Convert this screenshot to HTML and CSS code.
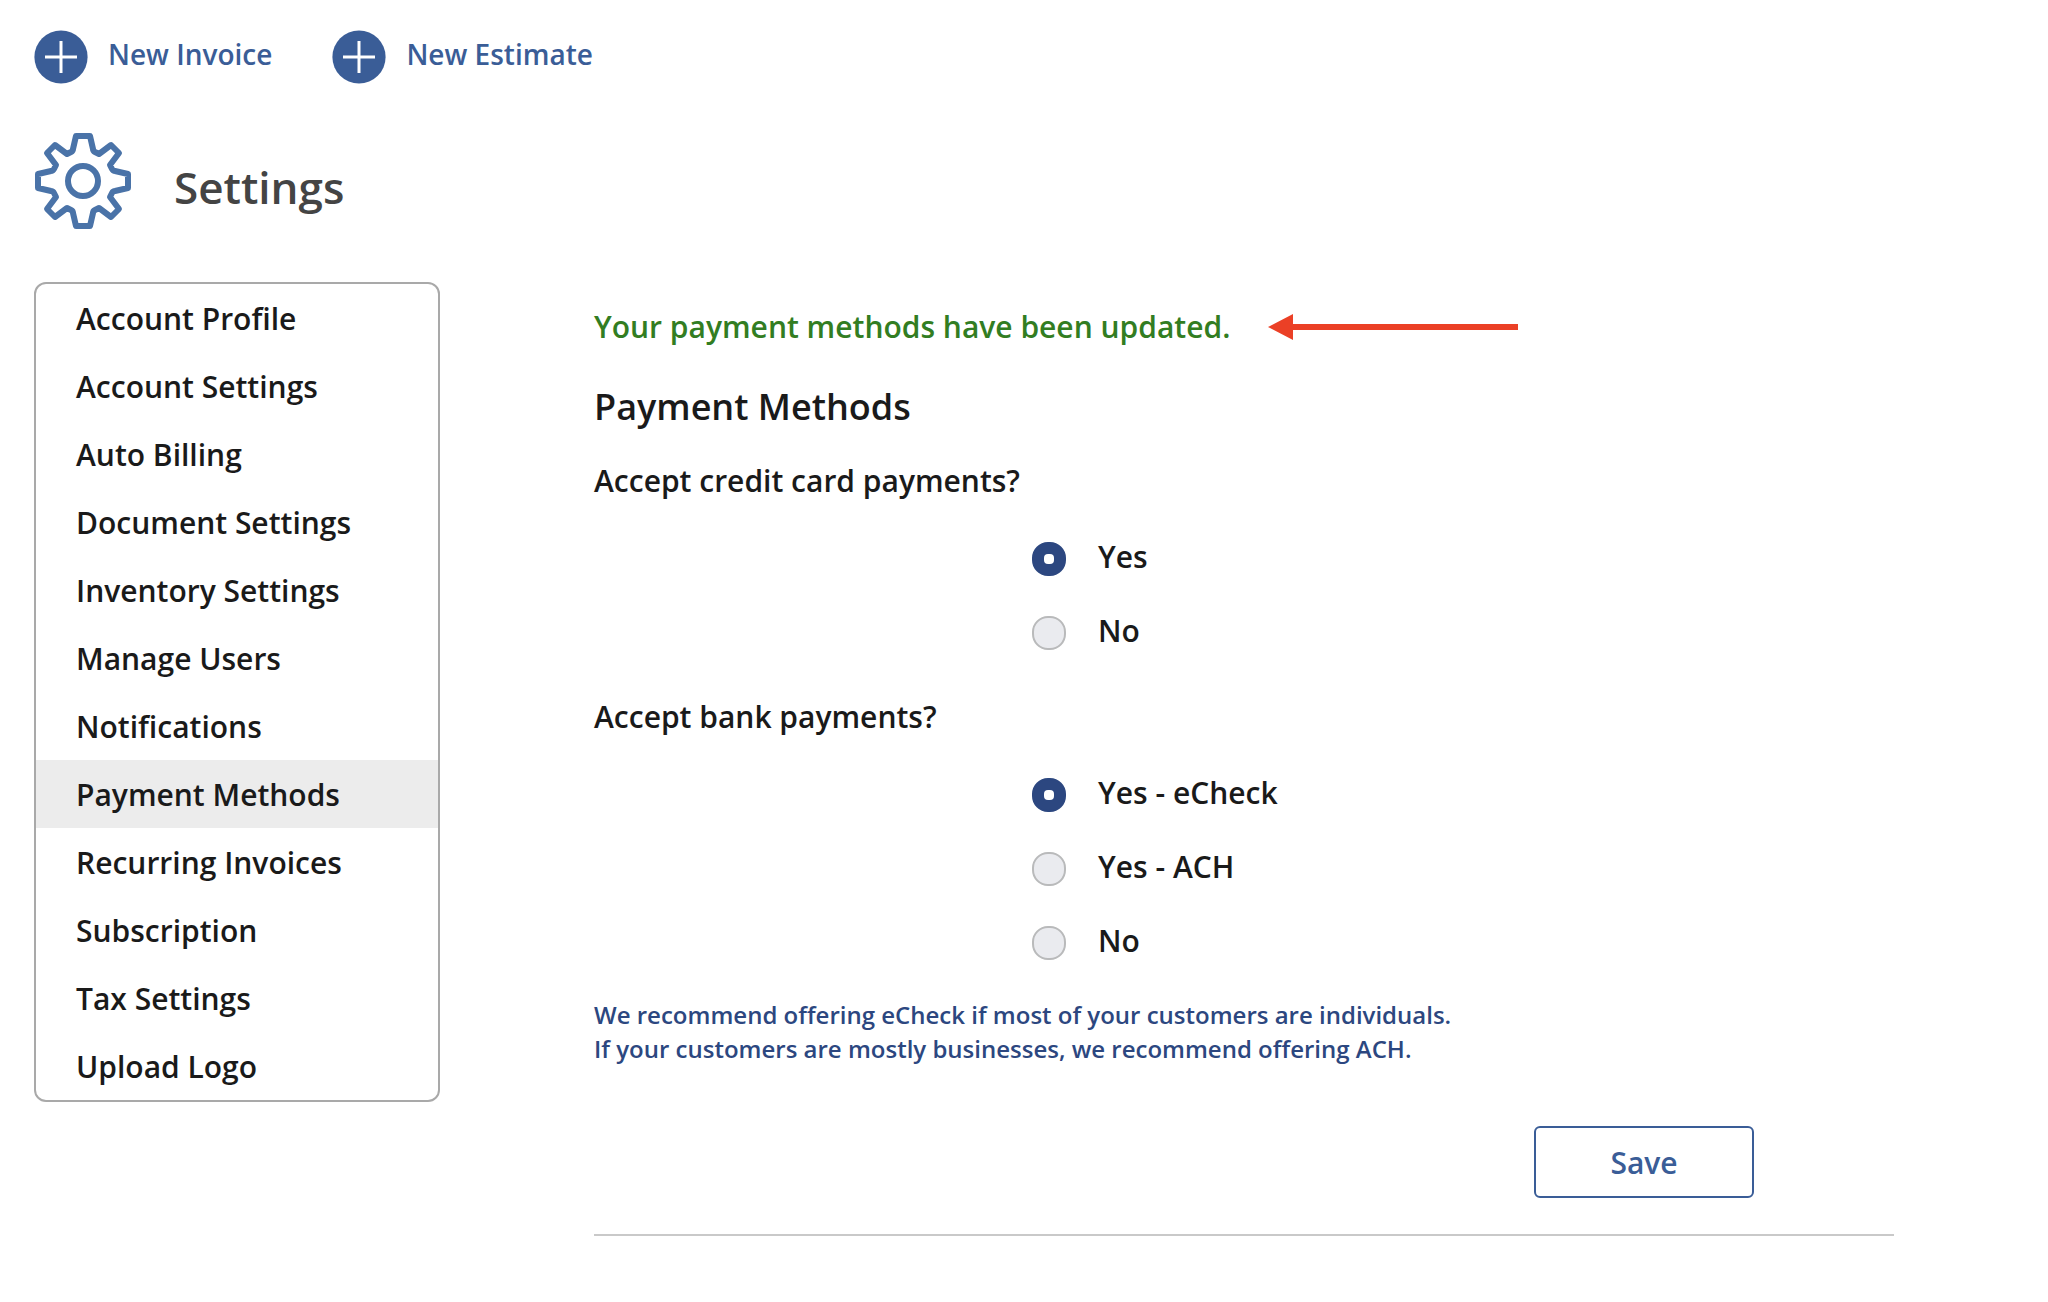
FILE: index.html
```html
<!DOCTYPE html>
<html lang="en">
<head>
<meta charset="utf-8">
<meta name="viewport" content="width=device-width, initial-scale=1">
<title>Settings - Payment Methods</title>
<link rel="stylesheet" href="styles.css">
</head>
<body>
<header class="quick-actions">
  <a class="quick-link" href="#new-invoice">
    <svg class="plus-icon" viewBox="0 0 54 54" aria-hidden="true"><circle cx="27" cy="27" r="26.6" fill="#3a5d97"/><path d="M27 11v32M11 27h32" stroke="#fff" stroke-width="3"/></svg>
    <span>New Invoice</span>
  </a>
  <a class="quick-link" href="#new-estimate">
    <svg class="plus-icon" viewBox="0 0 54 54" aria-hidden="true"><circle cx="27" cy="27" r="26.6" fill="#3a5d97"/><path d="M27 11v32M11 27h32" stroke="#fff" stroke-width="3"/></svg>
    <span>New Estimate</span>
  </a>
</header>
<div class="page-title">
  <svg class="gear-icon" viewBox="0 0 96 96" aria-hidden="true">
    <g fill="none" stroke="#4a73a8" stroke-width="6" stroke-linejoin="round">
      <path d="M41 3H55L58 16Q58 18 60 19L64 21L76 12L84 20L75 32L77 36Q78 38 80 38L93 41V55L80 58Q78 58 77 60L75 64L84 76L76 84L64 75L60 77Q58 78 58 80L55 93H41L38 80Q38 78 36 77L32 75L20 84L12 76L21 64L19 60Q18 58 16 58L3 55V41L16 38Q18 38 19 36L21 32L12 20L20 12L32 21L36 19Q38 18 38 16Z"/>
      <circle cx="48" cy="48" r="15"/>
    </g>
  </svg>
  <h1>Settings</h1>
</div>
<div class="layout">
  <nav class="menu" aria-label="Settings">
    <a href="#account-profile">Account Profile</a>
    <a href="#account-settings">Account Settings</a>
    <a href="#auto-billing">Auto Billing</a>
    <a href="#document-settings">Document Settings</a>
    <a href="#inventory-settings">Inventory Settings</a>
    <a href="#manage-users">Manage Users</a>
    <a href="#notifications">Notifications</a>
    <a class="active" href="#payment-methods" aria-current="page">Payment Methods</a>
    <a href="#recurring-invoices">Recurring Invoices</a>
    <a href="#subscription">Subscription</a>
    <a href="#tax-settings">Tax Settings</a>
    <a href="#upload-logo">Upload Logo</a>
  </nav>
  <main>
    <div class="notice">
      <p role="status">Your payment methods have been updated.</p>
      <svg class="arrow" viewBox="0 0 250 26" aria-hidden="true"><path d="M0 13L25 0V10H250V16H25V26Z" fill="#eb4026"/></svg>
    </div>
    <h2>Payment Methods</h2>
    <form>
      <fieldset>
        <legend>Accept credit card payments?</legend>
        <div class="options">
          <label><input type="radio" name="card" value="yes" checked><span>Yes</span></label>
          <label><input type="radio" name="card" value="no"><span>No</span></label>
        </div>
      </fieldset>
      <fieldset>
        <legend>Accept bank payments?</legend>
        <div class="options">
          <label><input type="radio" name="bank" value="echeck" checked><span>Yes - eCheck</span></label>
          <label><input type="radio" name="bank" value="ach"><span>Yes - ACH</span></label>
          <label><input type="radio" name="bank" value="no"><span>No</span></label>
        </div>
      </fieldset>
      <p class="hint">We recommend offering eCheck if most of your customers are individuals.<br>If your customers are mostly businesses, we recommend offering ACH.</p>
      <div class="form-actions"><button type="submit">Save</button></div>
    </form>
  </main>
</div>
</body>
</html>
```
FILE: styles.css
```css
* {
  box-sizing: border-box;
}

body {
  margin: 0;
  padding: 30px 34px;
  background: #fff;
  color: #1a1a1a;
  font-family: "Open Sans", "Noto Sans", sans-serif;
  font-size: 30px;
  font-weight: 600;
}

h1, h2, p {
  margin: 0;
  font-weight: 600;
}

a {
  color: inherit;
  text-decoration: none;
}

.quick-actions {
  display: flex;
  gap: 60px;
}

.quick-link {
  display: flex;
  gap: 20px;
  color: #3a5d97;
  font-size: 28px;
  line-height: 48px;
}

.plus-icon {
  width: 54px;
  height: 54px;
}

.page-title {
  display: flex;
  gap: 42px;
  margin: 49px 0 41px;
}

.gear-icon {
  width: 98px;
  height: 96px;
}

h1 {
  color: #444;
  font-size: 44px;
  line-height: 108px;
}

.layout {
  display: grid;
  grid-template-columns: 406px 1fr;
  gap: 154px;
  align-items: start;
  padding-right: 120px;
}

.menu {
  display: flex;
  flex-direction: column;
  overflow: hidden;
  border: 2px solid #a9a9a9;
  border-radius: 12px;
}

.menu a {
  padding: 2px 0 0 40px;
  line-height: 66px;
}

.menu .active {
  background: #ececec;
}

main {
  padding-top: 11px;
  border-bottom: 2px solid #c9c9c9;
}

.notice {
  display: flex;
  align-items: center;
  gap: 38px;
  color: #327d22;
  line-height: 68px;
}

.arrow {
  width: 250px;
  height: 26px;
}

h2 {
  margin: 22px 0 30px;
  font-size: 36px;
  line-height: 48px;
}

fieldset {
  min-width: 0;
  margin: 0 0 47px;
  padding: 0;
  border: 0;
}

fieldset + fieldset {
  margin-bottom: 38px;
}

legend {
  padding: 0;
  line-height: 40px;
}

.options {
  display: flex;
  flex-direction: column;
  align-items: flex-start;
  gap: 40px;
  padding: 41px 0 0 438px;
}

.options label {
  display: flex;
  gap: 32px;
  line-height: 30px;
}

.options input {
  appearance: none;
  width: 34px;
  height: 34px;
  margin: 0;
  border: 2px solid #b9babb;
  border-radius: 16px;
  background: #eaebef;
}

.options input:checked {
  display: grid;
  place-items: center;
  border-color: #2c4780;
  background: #2c4780;
}

.options input:checked::before {
  content: "";
  width: 10px;
  height: 10px;
  border-radius: 4px;
  background: #fff;
}

.hint {
  color: #2c4780;
  font-size: 24px;
  line-height: 34px;
}

.form-actions {
  display: flex;
  justify-content: flex-end;
  padding: 60px 140px 36px 0;
}

button {
  width: 220px;
  height: 72px;
  padding: 0;
  border: 2px solid #3a5d97;
  border-radius: 6px;
  background: #fff;
  color: #3a5d97;
  font: inherit;
}
```
